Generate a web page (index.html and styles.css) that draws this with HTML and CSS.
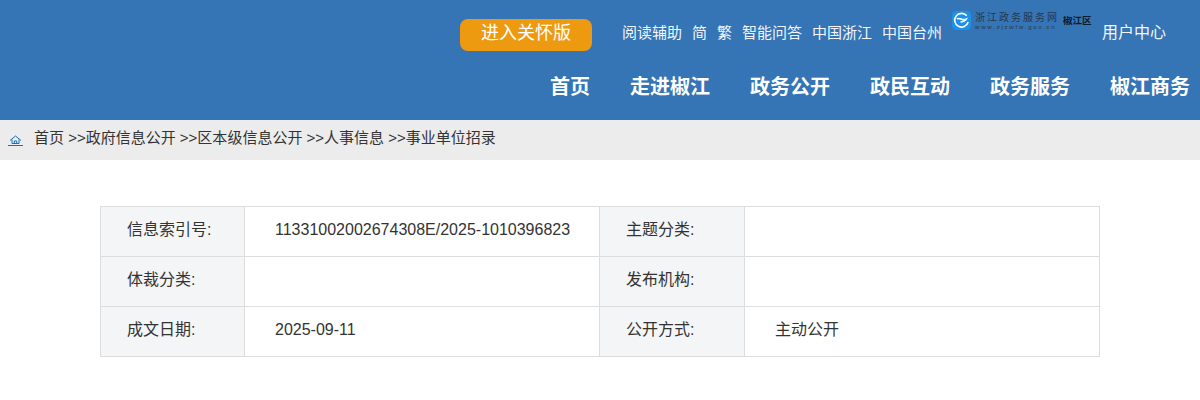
FILE: index.html
```html
<!doctype html>
<html>

<head>
    <meta charset="UTF-8">
    <title>事业单位招录</title>
    <link rel="stylesheet" href="styles.css">
</head>

<body>
    <div class="header">
        <div class="top-bar">
            <a class="care-btn">进入关怀版</a>
            <a class="top-link">阅读辅助</a>
            <a class="top-link">简</a>
            <a class="top-link">繁</a>
            <a class="top-link">智能问答</a>
            <a class="top-link">中国浙江</a>
            <a class="top-link">中国台州</a>
            <div class="zwfw-logo">
                <svg class="zwfw-icon" width="19" height="19" viewBox="0 0 18 18">
                    <rect width="18" height="18" rx="4" fill="#1e90e8"/>
                    <path d="M14 4.500A6.500 6.500 0 1 0 15.300 10.500" fill="none" stroke="#fff" stroke-width="1.500"/>
                    <path d="M4.500 7.500c3-1.500 5 2 9 .2-1 2-3 2.300-5.500 2.800" fill="none" stroke="#fff" stroke-width="1.500"/>
                </svg>
                <div class="zwfw-text">
                    <span class="zwfw-name">浙江政务服务网</span>
                    <span class="zwfw-url">www.zjzwfw.gov.cn</span>
                </div>
                <span class="zwfw-area">椒江区</span>
            </div>
            <a class="top-link user-center">用户中心</a>
        </div>
        <div class="nav">
            <a>首页</a>
            <a>走进椒江</a>
            <a>政务公开</a>
            <a>政民互动</a>
            <a>政务服务</a>
            <a>椒江商务</a>
        </div>
    </div>

    <div class="crumb">
        <svg class="home-icon" width="15" height="13" viewBox="0 0 15 13">
            <path d="M2 6.500 7.500 2 13 6.500M4 5.500V9.500h7V5.500M6.300 9.500V7h2.400v2.500" fill="none" stroke="#1a6fb5" stroke-width="1"/>
            <path d="M0 11.500h15" fill="none" stroke="#1a6fb5" stroke-width="1"/>
        </svg>
        <span class="crumb-text">首页 &gt;&gt;政府信息公开 &gt;&gt;区本级信息公开 &gt;&gt;人事信息 &gt;&gt;事业单位招录</span>
    </div>

    <div class="info-table">
        <div class="label">信息索引号:</div>
        <div class="value">11331002002674308E/2025-1010396823</div>
        <div class="label">主题分类:</div>
        <div class="value"></div>
        <div class="label">体裁分类:</div>
        <div class="value"></div>
        <div class="label">发布机构:</div>
        <div class="value"></div>
        <div class="label">成文日期:</div>
        <div class="value">2025-09-11</div>
        <div class="label">公开方式:</div>
        <div class="value">主动公开</div>
    </div>
</body>

</html>
```

FILE: styles.css
```css
html, body {
    height: 400px;
    overflow: hidden;
}
body {
    margin: 0;
    background-color: #fff;
    font-family: "Liberation Sans", "Noto Sans CJK SC", sans-serif;
    color: #333;
}
.header {
    height: 120px;
    background-color: #3574b5;
    color: #fff;
}
.top-bar {
    display: flex;
    align-items: flex-start;
    height: 61px;
    padding-left: 460px;
}
.care-btn {
    width: 132px;
    height: 32px;
    margin: 19px 30px 0 0;
    border-radius: 8px;
    background-color: #ee9a10;
    font-size: 18px;
    line-height: 28px;
    text-align: center;
}
.top-link {
    margin: 24px 10px 0 0;
    font-size: 15px;
    line-height: 18px;
    color: #f2f6fb;
}
.zwfw-logo {
    display: flex;
    width: 150px;
    margin-top: 11px;
}
.zwfw-icon {
    flex: none;
}
.zwfw-text {
    display: flex;
    flex-direction: column;
    width: 88px;
    margin-left: 4px;
    color: #26374b;
}
.zwfw-name {
    font-family: "Liberation Serif", "Noto Sans CJK SC", serif;
    font-size: 10px;
    line-height: 13px;
    letter-spacing: 2px;
    white-space: nowrap;
}
.zwfw-url {
    font-size: 6px;
    line-height: 7px;
    letter-spacing: 1.8px;
    white-space: nowrap;
}
.zwfw-area {
    margin: 4px 0 0 0;
    font-size: 9.500px;
    line-height: 12px;
    font-weight: bold;
    color: #0e1a2e;
}
.user-center {
    margin: 24px 0 0 0;
    font-size: 16px;
}
.nav {
    display: flex;
    justify-content: flex-end;
    gap: 40px;
    padding-right: 10px;
}
.nav a {
    font-size: 20px;
    line-height: 52px;
    font-weight: bold;
}
.crumb {
    display: flex;
    align-items: center;
    height: 40px;
    padding-left: 8px;
    background-color: #ececec;
    font-size: 15px;
}
.home-icon {
    margin: 0 11px 0 0;
}
.crumb-text {
    margin-bottom: 8px;
}
.info-table {
    display: grid;
    grid-template-columns: 144px 355px 145px 1fr;
    grid-auto-rows: 50px;
    box-sizing: border-box;
    width: 1000px;
    margin: 46px auto 0;
    border-top: 1px solid #ddd;
    border-left: 1px solid #ddd;
    font-size: 16px;
}
.label, .value {
    border-right: 1px solid #ddd;
    border-bottom: 1px solid #ddd;
    line-height: 45px;
    padding-bottom: 4px;
}
.label {
    padding-left: 26px;
    background-color: #f4f5f7;
}
.value {
    padding-left: 30px;
}
```
